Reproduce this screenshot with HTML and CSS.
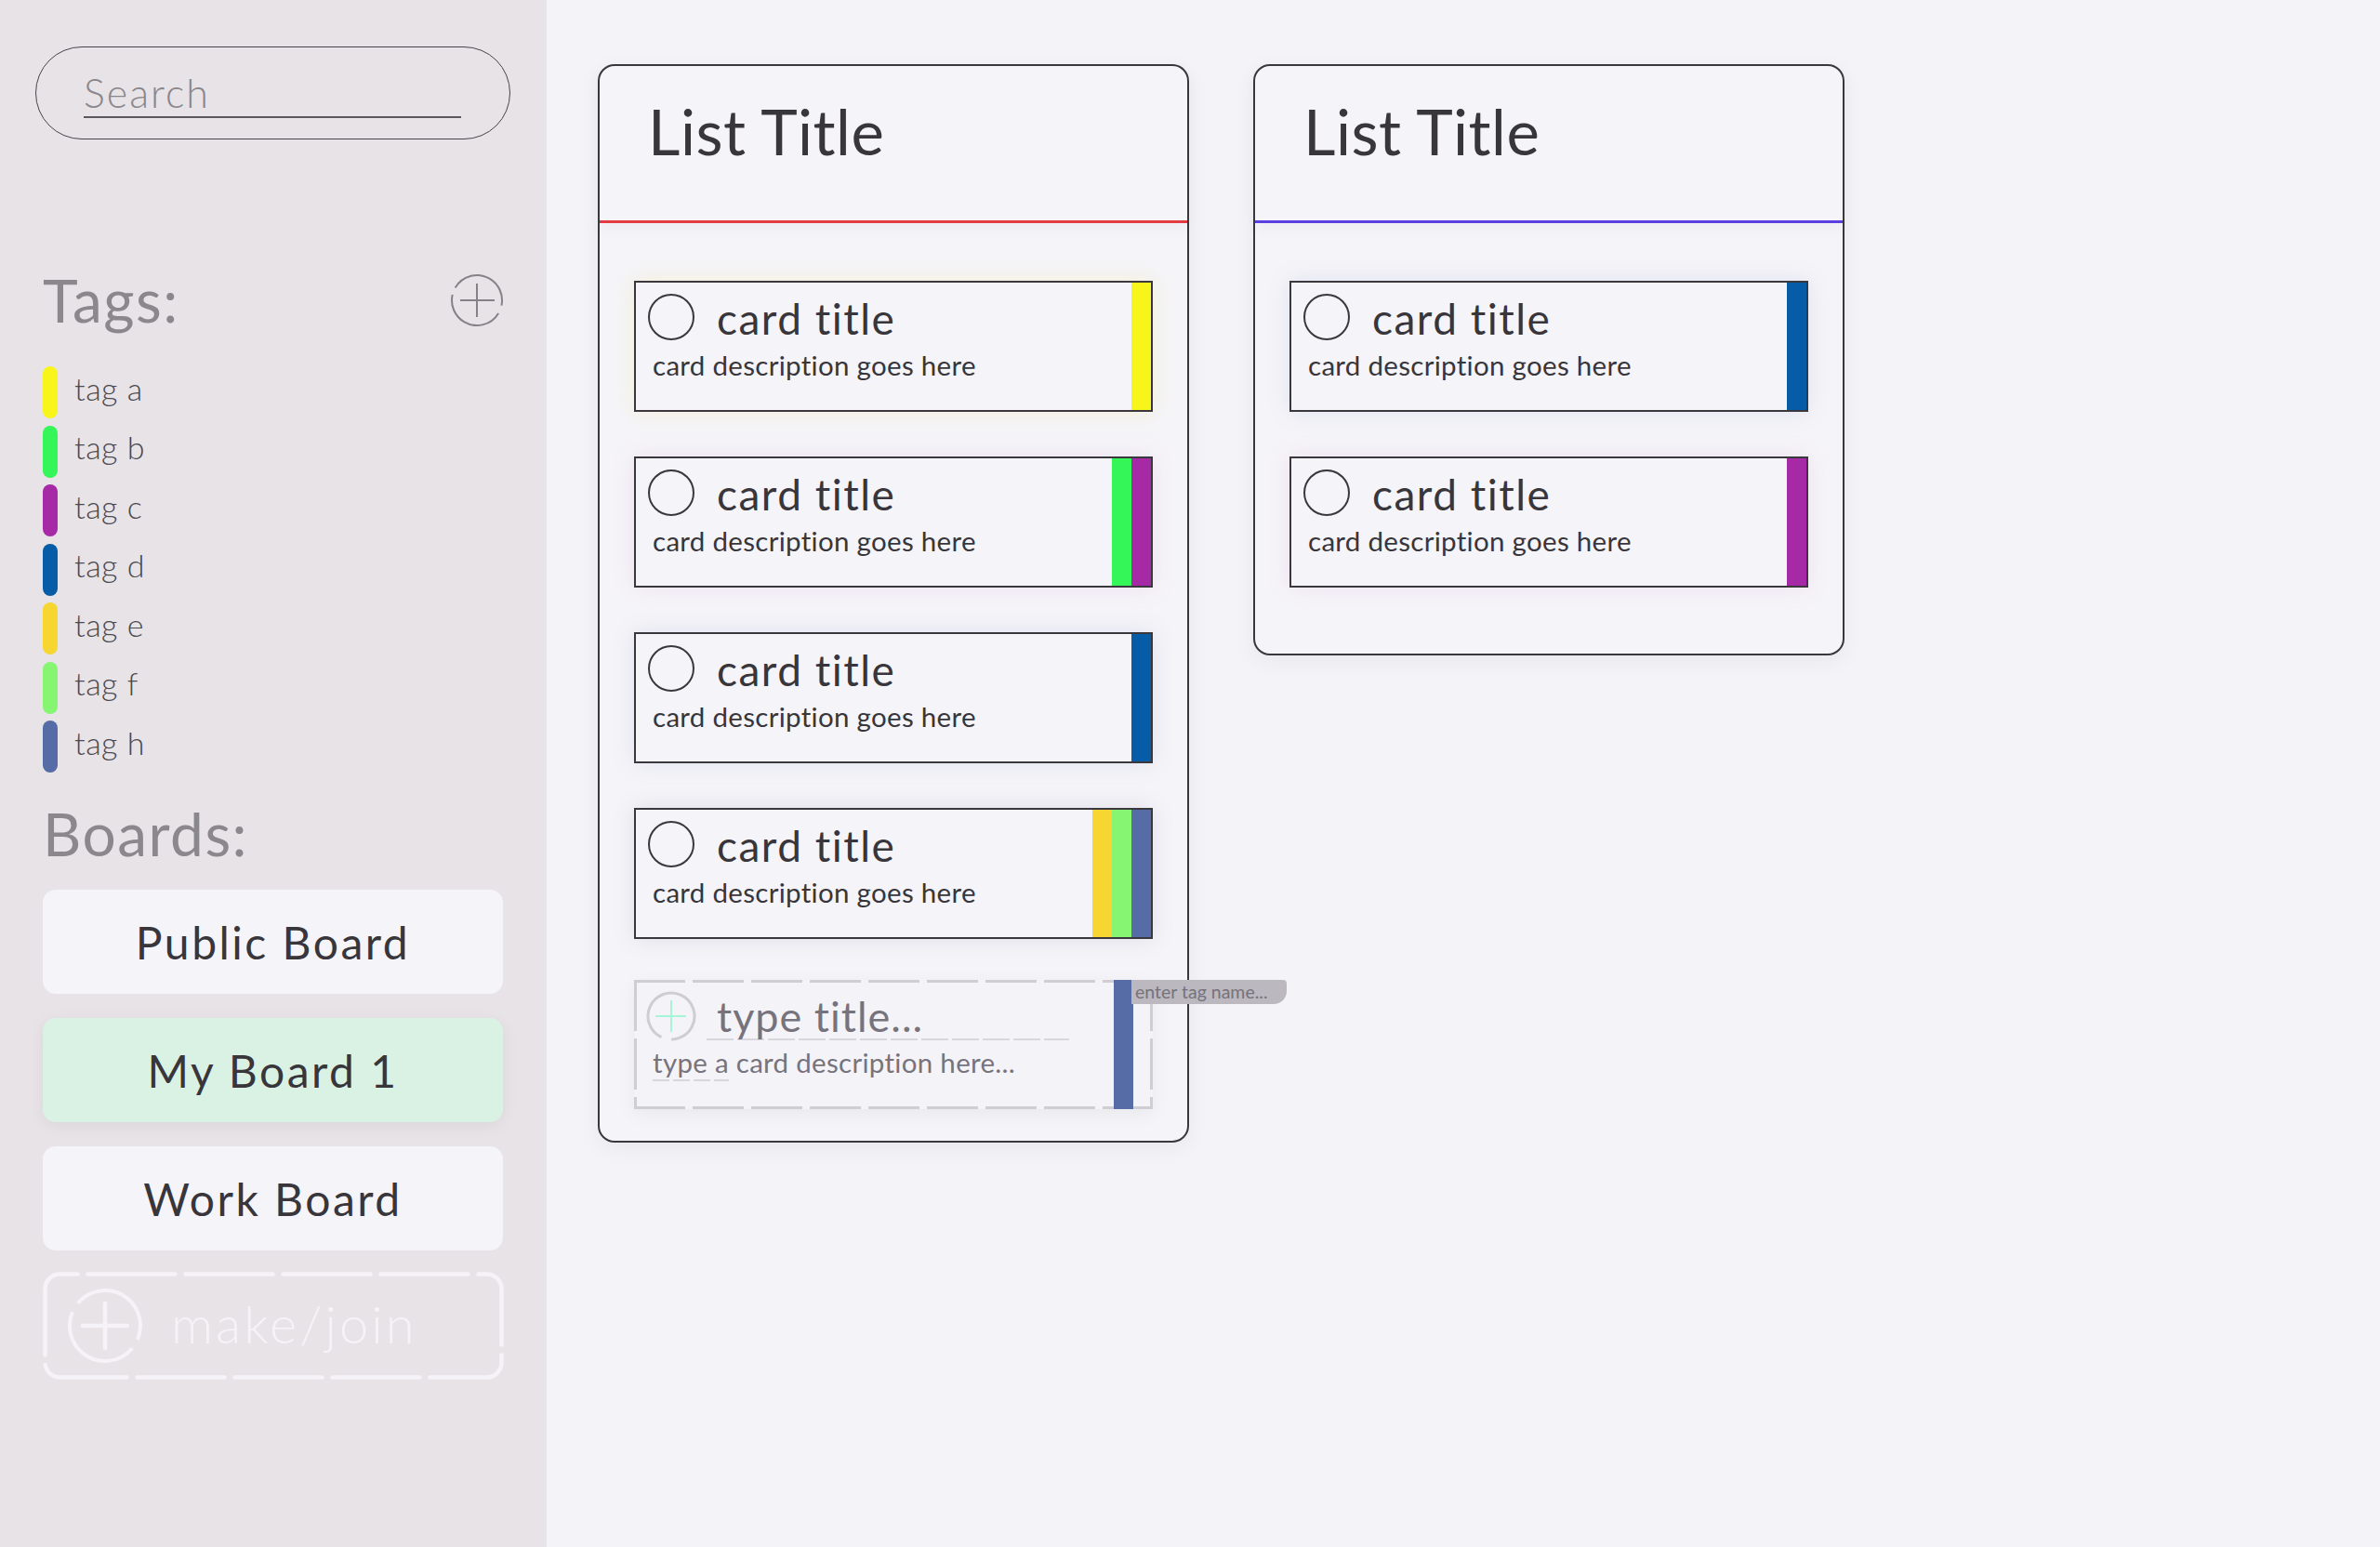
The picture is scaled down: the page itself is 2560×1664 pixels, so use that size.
FILE: index.html
```html
<!DOCTYPE html>
<html lang="en">
<head>
<meta charset="utf-8">
<title>Boards</title>
<link rel="stylesheet" href="styles.css">
</head>
<body>
<div class="app">
  <aside class="sidebar">
    <div class="search"><span class="search-field">Search</span></div>

    <div class="section-head">
      <h2 class="section-title">Tags:</h2>
      <svg class="add-tag" width="58" height="58" viewBox="0 0 58 58">
        <circle cx="29" cy="29" r="27" fill="none" stroke="#858287" stroke-width="2" stroke-dasharray="76 9" transform="rotate(-150 29 29)"/>
        <path d="M11 29H48M29 11V47" stroke="#858287" stroke-width="2" fill="none"/>
      </svg>
    </div>

    <ul class="tags">
      <li class="tag"><span class="tag-pill c-a"></span><span class="tag-name">tag a</span></li>
      <li class="tag"><span class="tag-pill c-b"></span><span class="tag-name">tag b</span></li>
      <li class="tag"><span class="tag-pill c-c"></span><span class="tag-name">tag c</span></li>
      <li class="tag"><span class="tag-pill c-d"></span><span class="tag-name">tag d</span></li>
      <li class="tag"><span class="tag-pill c-e"></span><span class="tag-name">tag e</span></li>
      <li class="tag"><span class="tag-pill c-f"></span><span class="tag-name">tag f</span></li>
      <li class="tag"><span class="tag-pill c-h"></span><span class="tag-name">tag h</span></li>
    </ul>

    <h2 class="section-title boards-title">Boards:</h2>
    <div class="boards">
      <div class="board">Public Board</div>
      <div class="board active">My Board 1</div>
      <div class="board">Work Board</div>
      <div class="board-new">
        <svg class="board-new-frame" width="496" height="116" viewBox="0 0 496 116">
          <rect x="2.5" y="2.5" width="491" height="111" rx="16" fill="none" stroke="#f5f3f7" stroke-width="4.5" stroke-dasharray="94 11" stroke-dashoffset="-30" stroke-linecap="round"/>
        </svg>
        <svg class="board-new-icon" width="82" height="82" viewBox="0 0 82 82">
          <circle cx="41" cy="41" r="38" fill="none" stroke="#f5f3f7" stroke-width="4" stroke-dasharray="108 11" transform="rotate(-140 41 41)"/>
          <path d="M17 41H65M41 17V65" stroke="#f5f3f7" stroke-width="4.5" stroke-linecap="round" fill="none"/>
        </svg>
        <span class="board-new-label">make/join</span>
      </div>
    </div>
  </aside>

  <main class="lists">
    <section class="list">
      <header class="list-head red"><h1 class="list-title">List Title</h1></header>
      <div class="list-body">
        <article class="card glow-yellow">
          <div class="card-main">
            <div class="card-head"><span class="check"></span><h3 class="card-title">card title</h3></div>
            <p class="card-desc">card description goes here</p>
          </div>
          <div class="card-tags"><span class="strip c-a"></span></div>
        </article>
        <article class="card glow-pink">
          <div class="card-main">
            <div class="card-head"><span class="check"></span><h3 class="card-title">card title</h3></div>
            <p class="card-desc">card description goes here</p>
          </div>
          <div class="card-tags"><span class="strip c-b"></span><span class="strip c-c"></span></div>
        </article>
        <article class="card glow-blue">
          <div class="card-main">
            <div class="card-head"><span class="check"></span><h3 class="card-title">card title</h3></div>
            <p class="card-desc">card description goes here</p>
          </div>
          <div class="card-tags"><span class="strip c-d"></span></div>
        </article>
        <article class="card glow-gray">
          <div class="card-main">
            <div class="card-head"><span class="check"></span><h3 class="card-title">card title</h3></div>
            <p class="card-desc">card description goes here</p>
          </div>
          <div class="card-tags"><span class="strip c-e"></span><span class="strip c-f"></span><span class="strip c-h"></span></div>
        </article>
        <article class="card card-new">
          <div class="card-main">
            <div class="card-head">
              <svg class="new-check" width="54" height="54" viewBox="0 0 54 54">
                <circle cx="27" cy="27" r="25" fill="none" stroke="#cfcdd2" stroke-width="3" stroke-dasharray="145 12" transform="rotate(115 27 27)"/>
                <path d="M10 27H43M27 10V44" stroke="#a6f5d8" stroke-width="2" fill="none"/>
              </svg>
              <span class="new-title">type title...</span>
            </div>
            <p class="card-desc new-desc"><span class="typo">type a</span> card description here...</p>
          </div>
          <div class="card-tags"><span class="strip c-h"></span><span class="strip-empty"></span></div>
          <div class="tag-input">enter tag name...</div>
        </article>
      </div>
    </section>

    <section class="list list-short">
      <header class="list-head purple"><h1 class="list-title">List Title</h1></header>
      <div class="list-body">
        <article class="card glow-blue">
          <div class="card-main">
            <div class="card-head"><span class="check"></span><h3 class="card-title">card title</h3></div>
            <p class="card-desc">card description goes here</p>
          </div>
          <div class="card-tags"><span class="strip c-d"></span></div>
        </article>
        <article class="card glow-pink">
          <div class="card-main">
            <div class="card-head"><span class="check"></span><h3 class="card-title">card title</h3></div>
            <p class="card-desc">card description goes here</p>
          </div>
          <div class="card-tags"><span class="strip c-c"></span></div>
        </article>
      </div>
    </section>
  </main>
</div>
</body>
</html>
```

FILE: styles.css
```css
* { box-sizing: border-box; }

html, body {
  margin: 0;
  padding: 0;
  height: 100%;
}

body {
  background: #f4f3f7;
  font-family: "Lato", "Open Sans", sans-serif;
  color: #38363b;
}

.app {
  display: flex;
  min-height: 1664px;
}

/* ---------- sidebar ---------- */
.sidebar {
  width: 588px;
  flex: none;
  background: #e7e3e7;
  padding: 50px 47px 0 46px;
  display: flex;
  flex-direction: column;
}

.search {
  height: 100px;
  margin: 0 -8px;
  border: 1.5px solid #47454a;
  border-radius: 50px;
  padding: 0 52px 0 51px;
  display: flex;
  align-items: center;
}

.search-field {
  flex: 1;
  font-size: 43px;
  font-weight: 300;
  color: #8a878c;
  line-height: 1;
  padding-bottom: 4px;
  border-bottom: 2px solid #5a585d;
  letter-spacing: 2px;
  margin-top: 4px;
}

.section-head {
  margin-top: 141px;
  display: flex;
  align-items: center;
  justify-content: space-between;
}

.section-title {
  margin: 0;
  font-size: 64px;
  line-height: 64px;
  font-weight: 400;
  color: #8b888d;
  letter-spacing: 1.5px;
}

.add-tag { display: block; margin-right: -1px; }

.tags {
  list-style: none;
  margin: 39px 0 0;
  padding: 0;
  display: flex;
  flex-direction: column;
  gap: 7.5px;
}

.tag {
  height: 56px;
  display: flex;
  align-items: center;
  gap: 18px;
  font-size: 34px;
  font-weight: 300;
  color: #4b484e;
  letter-spacing: 0.5px;
}

.tag-name {
  line-height: 1;
  margin-top: -9px;
}

.tag-pill {
  width: 16px;
  height: 56px;
  border-radius: 8px;
  flex: none;
}

.c-a { background: #f7f51a; }
.c-b { background: #34f658; }
.c-c { background: #a62aa6; }
.c-d { background: #065ca6; }
.c-e { background: #f7d632; }
.c-f { background: #86f572; }
.c-h { background: #566ca6; }

.boards-title { margin-top: 34px; }

.boards {
  margin-top: 28px;
  display: flex;
  flex-direction: column;
  gap: 26px;
}

.board {
  height: 112px;
  border-radius: 14px;
  background: #f5f4f8;
  display: flex;
  align-items: center;
  justify-content: center;
  font-size: 48px;
  color: #38363b;
  letter-spacing: 2.5px;
}

.board.active {
  background: #daf2e4;
  box-shadow: 0 4px 18px rgba(0, 0, 0, 0.06);
}

.board-new {
  position: relative;
  height: 116px;
  margin-top: -3px;
  display: flex;
  align-items: center;
  padding-left: 26px;
  gap: 30px;
}

.board-new-frame {
  position: absolute;
  left: 0;
  top: 0;
}

.board-new-icon { display: block; flex: none; }

.board-new-label {
  font-size: 56px;
  font-weight: 300;
  color: #f5f3f7;
  letter-spacing: 3px;
  margin-top: -6px;
}

/* ---------- lists ---------- */
.lists {
  flex: 1;
  display: flex;
  align-items: flex-start;
  gap: 69px;
  padding: 69px 0 0 55px;
}

.list {
  width: 636px;
  border: 2.5px solid #3a383d;
  border-radius: 18px;
  background: #f5f4f8;
  box-shadow: 0 6px 24px rgba(0, 0, 0, 0.05);
}

.list-head {
  height: 169px;
  padding: 37px 0 0 52px;
  border-bottom: 3px solid;
  box-shadow: 0 8px 14px rgba(0, 0, 0, 0.03);
}

.list-head.red { border-bottom-color: #e23c42; }
.list-head.purple { border-bottom-color: #5b3fe0; }

.list-title {
  margin: 0;
  font-size: 67px;
  line-height: 1;
  font-weight: 400;
  color: #38363b;
  letter-spacing: 0.5px;
}

.list-body {
  padding: 62px 37px 17px 37px;
  display: flex;
  flex-direction: column;
}

.card {
  position: relative;
  height: 141px;
  margin-bottom: 48px;
  border: 2.5px solid #3a383d;
  background: #f5f4f8;
  display: flex;
}

.glow-yellow { box-shadow: 0 0 22px rgba(240, 230, 120, 0.25); }
.glow-pink { box-shadow: 0 0 22px rgba(220, 150, 220, 0.2); }
.glow-blue { box-shadow: 0 0 22px rgba(120, 150, 210, 0.18); }
.glow-gray { box-shadow: 0 0 22px rgba(120, 120, 160, 0.16); }

.card-main {
  flex: 1;
  padding: 12px 0 0 13px;
}

.card-head {
  display: flex;
  align-items: center;
  gap: 24px;
}

.check {
  width: 50px;
  height: 50px;
  border: 2.5px solid #3a383d;
  border-radius: 50%;
  flex: none;
}

.card-title {
  margin: 0;
  margin-top: 4px;
  font-size: 46px;
  line-height: 1;
  font-weight: 400;
  color: #38363b;
  letter-spacing: 1.5px;
}

.card-desc {
  margin: 12px 0 0 5px;
  font-size: 29.5px;
  line-height: 1;
  color: #38363b;
  letter-spacing: 0.3px;
}

.card-tags {
  display: flex;
  align-self: stretch;
}

.strip {
  width: 21px;
  display: block;
}

/* new card */
.card-new {
  border: none;
  height: 139px;
  margin-top: -4px;
  margin-bottom: 17px;
  box-shadow: 0 6px 20px rgba(0, 0, 0, 0.05);
  background:
    repeating-linear-gradient(90deg, #d0ced3 0 55px, transparent 55px 63px) top left / 100% 3px no-repeat,
    repeating-linear-gradient(90deg, #d0ced3 0 55px, transparent 55px 63px) bottom left / 100% 3px no-repeat,
    repeating-linear-gradient(180deg, #d0ced3 0 55px, transparent 55px 63px) top left / 3px 100% no-repeat,
    repeating-linear-gradient(180deg, #d0ced3 0 55px, transparent 55px 63px) top right / 3px 100% no-repeat,
    #f4f3f7;
}

.card-new .card-main { padding: 12px 0 0 14px; }

.new-check { display: block; flex: none; margin-left: -1px; }

.card-new .card-head { gap: 22px; }

.new-title {
  font-size: 45px;
  line-height: 1;
  color: #77737d;
  letter-spacing: 1px;
  width: 390px;
  margin-left: -11px;
  padding-left: 11px;
  padding-bottom: 3px;
  margin-top: 4px;
  background: repeating-linear-gradient(90deg, #d9d7dc 0 29px, transparent 29px 33px) bottom left / 100% 2px no-repeat;
}

.new-desc {
  color: #77737d;
  margin-top: 8px;
  margin-left: 6px;
}

.typo {
  padding-bottom: 3px;
  background: repeating-linear-gradient(90deg, #d9d7dc 0 18px, transparent 18px 22px) bottom left / 100% 2px no-repeat;
}

.strip-empty { width: 21px; display: block; }

.tag-input {
  position: absolute;
  left: 535px;
  top: 0;
  width: 167px;
  height: 26px;
  background: #bcb8c0;
  border-radius: 0 4px 14px 0;
  color: #76727b;
  font-size: 19.5px;
  line-height: 25px;
  padding-left: 4px;
  white-space: nowrap;
  overflow: hidden;
}

.list-short .list-body { padding-bottom: 23px; }
```
